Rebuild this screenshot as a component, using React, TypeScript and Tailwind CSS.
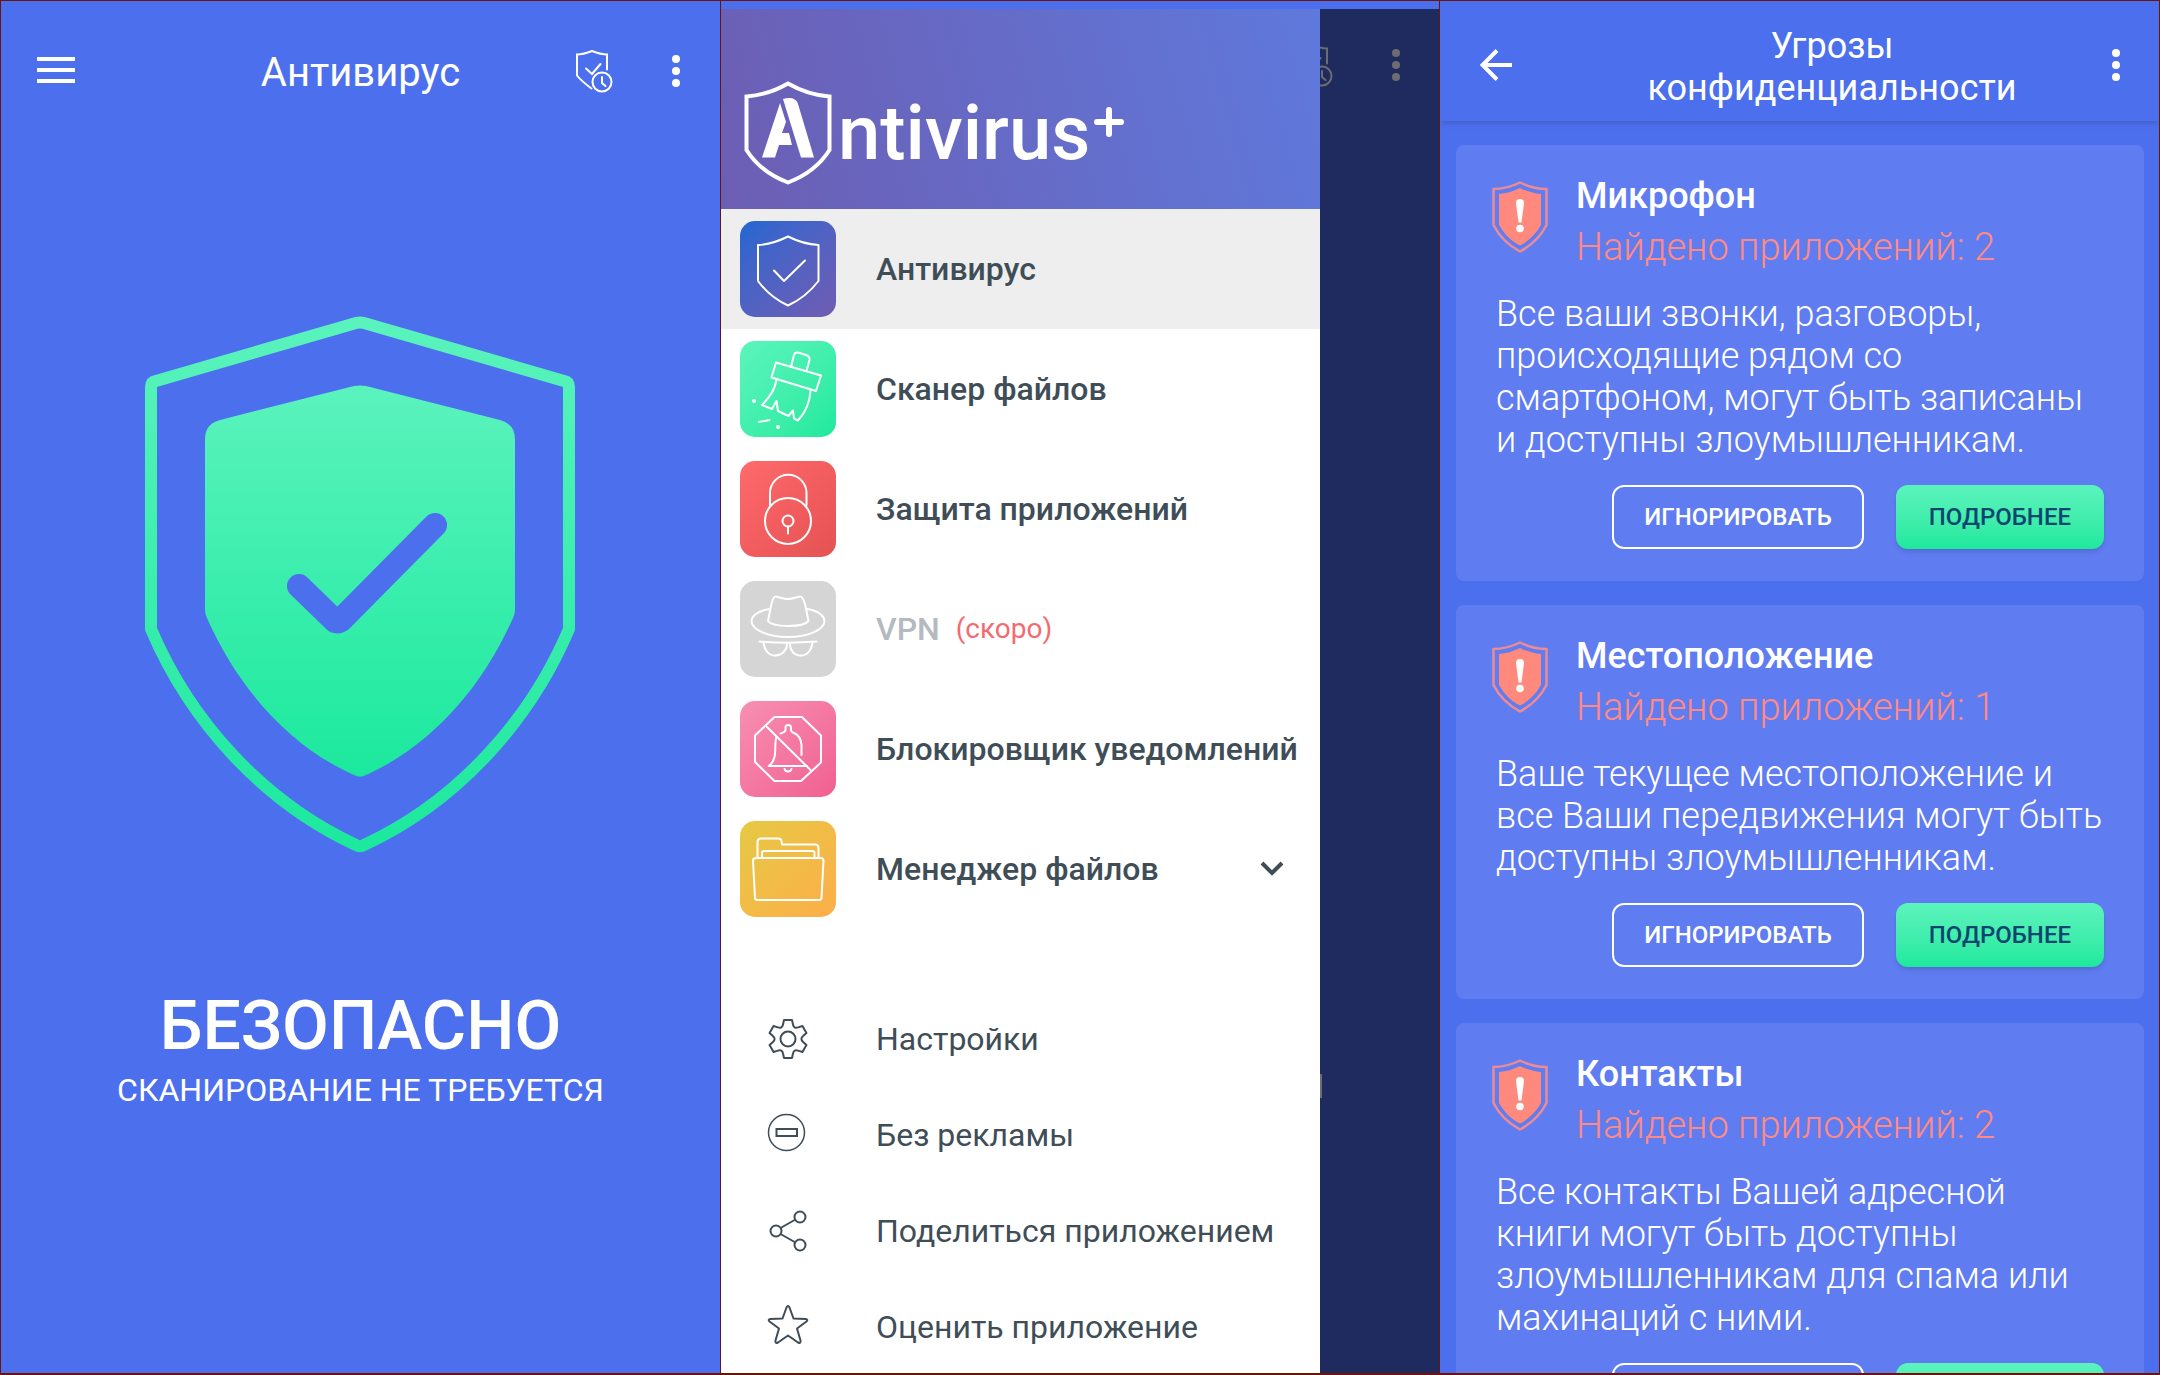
import React from "react";

/* ---------- icons ---------- */

function MenuIcon() {
  return (
    <svg viewBox="0 0 38 28" className="h-7 w-[38px]" fill="currentColor" aria-hidden="true">
      <path d="M0 0h38v4H0zM0 11h38v4H0zM0 22h38v4H0z" />
    </svg>
  );
}

function DotsIcon() {
  return (
    <svg viewBox="0 0 8 32" className="h-8 w-2 shrink-0" fill="currentColor" aria-hidden="true">
      <circle cx="4" cy="4" r="4" />
      <circle cx="4" cy="16" r="4" />
      <circle cx="4" cy="28" r="4" />
    </svg>
  );
}

function ShieldClockIcon() {
  return (
    <svg viewBox="0 0 40 44" className="h-11 w-10 shrink-0" fill="none" stroke="currentColor" strokeWidth="2" strokeLinecap="round" aria-hidden="true">
      <path d="M17.5 39.5C10 34 5 29 3 26.500V5.500C8 5.500 13 4 18 2C23 4 28 5.500 33 5.500V20.500" />
      <path d="M12 19.500L18 25L26.500 15" />
      <circle cx="28" cy="33" r="9.500" />
      <path d="M28 28V34L31.500 37" />
    </svg>
  );
}

function BackIcon() {
  return (
    <svg viewBox="0 0 32 32" className="size-8" fill="none" stroke="currentColor" strokeWidth="4" aria-hidden="true">
      <path d="M32 16H3.500M17 1.500L2.500 16L17 30.500" />
    </svg>
  );
}

function BigShield() {
  return (
    <svg viewBox="0 0 432 538" className="h-[538px] w-[432px]" fill="none" aria-hidden="true">
      <defs>
        <linearGradient id="mint" gradientUnits="userSpaceOnUse" x1="0" y1="0" x2="0" y2="538">
          <stop offset="0" stopColor="#5bf3bd" />
          <stop offset="1" stopColor="#1be99d" />
        </linearGradient>
        <linearGradient id="mintInner" gradientUnits="userSpaceOnUse" x1="0" y1="70" x2="0" y2="462">
          <stop offset="0" stopColor="#5bf3bd" />
          <stop offset="1" stopColor="#1be99d" />
        </linearGradient>
      </defs>
      <path
        d="M6 71Q6 66 11 65L211 7Q215 6 219 7L419 65Q424 66 424 71V313C385 405 312 486 219 529Q215 531.500 211 529C118 486 45 405 6 313Z"
        stroke="url(#mint)"
        strokeWidth="12"
        strokeLinejoin="round"
      />
      <path
        d="M60 123Q60 108 75 104L209 70Q215 69 221 70L355 104Q370 108 370 123V294Q370 298 368 302C337 372 286 430 221 459Q215 462 209 459C144 430 93 372 62 302Q60 298 60 294Z"
        fill="url(#mintInner)"
      />
      <path d="M154 270L189 304Q192 307 196 304L290 209" stroke="#4c6fee" strokeWidth="24" strokeLinecap="round" strokeLinejoin="round" />
    </svg>
  );
}

function LogoMark() {
  return (
    <svg viewBox="0 0 88 104" className="h-[104px] w-[88px] shrink-0" aria-hidden="true">
      <path
        d="M44 2.500C31 10 16 14.500 2.500 15.500V69C12 84 27 95 44 101.500C61 95 76 84 85.500 69V15.500C72 14.500 57 10 44 2.500Z"
        fill="none"
        stroke="#fff"
        strokeWidth="4"
      />
      <path d="M36 22L42 41L38 52H45L48 64H35L31 76.500H18Z" fill="#fff" />
      <path d="M39 18C46 16 52 17 54 23L70 76.500H57Z" fill="#fff" />
    </svg>
  );
}

function Plus() {
  return (
    <svg viewBox="0 0 30 30" className="mt-[26px] size-[30px]" stroke="#fff" strokeWidth="6" strokeLinecap="round" aria-hidden="true">
      <path d="M15 3V27M3 15H27" />
    </svg>
  );
}

function WarnShield() {
  return (
    <svg viewBox="0 0 56 72" className="mt-1.5 h-[72px] w-14 shrink-0" aria-hidden="true">
      <path
        d="M28 1.500C20 5.500 10 8 1.500 8V44C7 55 16 64 28 70.500C40 64 49 55 54.500 44V8C46 8 36 5.500 28 1.500Z"
        fill="none"
        stroke="#ee8b92"
        strokeWidth="2.500"
        strokeLinejoin="round"
      />
      <path d="M28 7C21 10.500 14 12.500 7 13V44C12 53 19 60 28 64.500C37 60 44 53 49 44V13C42 12.500 35 10.500 28 7Z" fill="#ff897d" />
      <path d="M24 22Q24 18 28 18Q32 18 32 22L29.500 41.500H26.500Z" fill="#fff" />
      <circle cx="28" cy="47.500" r="3.800" fill="#fff" />
    </svg>
  );
}

type TileProps = { children: React.ReactNode; className: string };

function Tile({ children, className }: TileProps) {
  return (
    <svg
      viewBox="0 0 96 96"
      className={"size-24 shrink-0 rounded-[15px] " + className}
      fill="none"
      stroke="#fff"
      strokeWidth="2"
      strokeLinejoin="round"
      strokeLinecap="round"
      aria-hidden="true"
    >
      {children}
    </svg>
  );
}

const antivirusTile = (
  <Tile className="bg-linear-to-br from-[#1f66d2] to-[#6f5cb2]">
    <path d="M48 15.500C38 20.500 28 23.500 18 24V60C26 71 36 79 48 84.500C60 79 70 71 78.500 60V24C68 23.500 58 20.500 48 15.500Z" />
    <path d="M34 49.500L44 60L65 39.500" />
  </Tile>
);

const scannerTile = (
  <Tile className="bg-linear-to-br from-[#5bf5bd] to-[#1de99e]">
    <path d="M51 26L54 14Q55 11 58 11.500L66 14Q70 15.500 69.500 19L66.500 30" />
    <path d="M36 21.500L81 34.500L76 50L31.500 36.500Z" />
    <path d="M36.500 39C35 48 30 56 22 64L32 68L36.500 60L38 70L48.500 75L53 69.500L54 77.500L58 79.500C66 71 70 60 70.500 49" />
    <path d="M19 81L29.500 79" />
    <circle cx="14" cy="60" r="1" />
    <circle cx="38" cy="86" r="1" />
  </Tile>
);

const lockTile = (
  <Tile className="bg-linear-to-br from-[#ff6a6c] to-[#e55254]">
    <path d="M30 44V32A18 18 0 0 1 66.500 32V44" />
    <circle cx="48" cy="60" r="23" />
    <circle cx="48" cy="60" r="5.500" />
    <path d="M48 65.500V72.500" />
  </Tile>
);

const vpnTile = (
  <Tile className="bg-[#d5d5d5]">
    <path d="M30 28C16 30 11.500 36 11.500 40C12 49 28 56 48 56C68 56 84 49 84.500 40C84.500 36 80 30 67 28" />
    <path d="M28 40L31 25Q33 15 36 15.500C42 17 45 18 48 18C51 18 55 17 60 15.500Q63 15 65.500 25L68.500 40C63 46.500 33 46.500 28 40Z" />
    <path d="M19.500 60.500C38 62 58 62 76.500 60.500" />
    <path d="M23.500 61.500C24 69 29 74.500 35 74.500C42 74.500 47 69 47 63.500" />
    <path d="M72.500 61.500C72 69 67 74.500 61 74.500C54 74.500 50 69 50 63.500" />
  </Tile>
);

const blockerTile = (
  <Tile className="bg-linear-to-br from-[#f78fb3] to-[#f05f91]">
    <path d="M34.500 16H62L81 34.500V61.500L61 80H34.500L15 61V34.500Z" />
    <path d="M26.500 25.500L70.500 69" />
    <path d="M40.500 32.500Q45.500 31 45.500 29V26.500Q45.500 24 48 24Q51 24 51 26.500V29Q51 31 54 32Q61 35 61.500 44V54" />
    <path d="M36.500 36C34.500 40 36 50 34.500 56Q33 62 28.700 65H67" />
    <path d="M44.500 68A3.700 3.700 0 0 0 51.500 68" />
  </Tile>
);

const folderTile = (
  <Tile className="bg-linear-to-br from-[#e6c944] to-[#fcae49]">
    <path d="M17.500 36V21Q17.500 17.500 21 17.500H38Q41 17.500 41.500 20L42 23.500H75Q78.500 23.500 78.500 27V36" />
    <path d="M22 36V32Q22 30 24 30H72.500Q74.500 30 74.500 32V36" />
    <path d="M16 37H80.500Q83.500 37 83.500 40L81.500 76.500Q81.500 79 79 79H17.500Q15 79 15 76.500L13 40Q13 37 16 37Z" />
  </Tile>
);

function gearOutline() {
  const pts: string[] = [];
  for (let i = 0; i < 6; i++) {
    const a = (i * Math.PI) / 3;
    const at = (x: number, y: number) =>
      `${(x * Math.cos(a) - y * Math.sin(a)).toFixed(2)} ${(x * Math.sin(a) + y * Math.cos(a)).toFixed(2)}`;
    pts.push(`${i === 0 ? "M" : "L"}${at(-4, -19)}L${at(4, -19)}L${at(5, -14.5)}Q${at(5.8, -10.2)} ${at(10.1, -11.6)}`);
  }
  return pts.join("") + "Z";
}

type LineIconProps = { children: React.ReactNode };

function LineIcon({ children }: LineIconProps) {
  return (
    <svg viewBox="-24 -24 48 48" className="size-12" fill="none" stroke="currentColor" strokeWidth="2" strokeLinejoin="round" aria-hidden="true">
      {children}
    </svg>
  );
}

const gearIcon = (
  <LineIcon>
    <path d={gearOutline()} />
    <circle r="7.500" />
  </LineIcon>
);

const noAdsIcon = (
  <LineIcon>
    <circle cx="-1.500" cy="-2.500" r="18" strokeWidth="1.500" />
    <path d="M-11.500 -6H9V1H-11.500Z" strokeLinejoin="miter" />
  </LineIcon>
);

const shareIcon = (
  <LineIcon>
    <circle cx="12" cy="-14" r="5.500" />
    <circle cx="-12" cy="0" r="5.500" />
    <circle cx="12" cy="14" r="5.500" />
    <path d="M-7.500 -3L7.500 -11.500M-7.500 3L7.500 11.500" />
  </LineIcon>
);

const starIcon = (
  <LineIcon>
    <path d="M-1.500 -19.500Q0 -22.500 1.500 -19.500L5.500 -8.500L17.500 -8Q20.500 -7.500 18.500 -5.500L9 1.500L12.500 13.500Q13 17 10 15.500L0 8.500L-10 15.500Q-13 17 -12.500 13.500L-9 1.500L-18.500 -5.500Q-20.500 -7.500 -17.500 -8L-5.500 -8.500Z" />
  </LineIcon>
);

/* ---------- data ---------- */

type Feature = { label: string; icon: React.ReactNode; active?: boolean; soon?: boolean; expandable?: boolean };

const features: Feature[] = [
  { label: "Антивирус", icon: antivirusTile, active: true },
  { label: "Сканер файлов", icon: scannerTile },
  { label: "Защита приложений", icon: lockTile },
  { label: "VPN", icon: vpnTile, soon: true },
  { label: "Блокировщик уведомлений", icon: blockerTile },
  { label: "Менеджер файлов", icon: folderTile, expandable: true },
];

const options = [
  { label: "Настройки", icon: gearIcon },
  { label: "Без рекламы", icon: noAdsIcon },
  { label: "Поделиться приложением", icon: shareIcon },
  { label: "Оценить приложение", icon: starIcon },
];

const threats = [
  {
    title: "Микрофон",
    count: 2,
    text: "Все ваши звонки, разговоры, происходящие рядом со смартфоном, могут быть записаны и доступны злоумышленникам.",
  },
  {
    title: "Местоположение",
    count: 1,
    text: "Ваше текущее местоположение и все Ваши передвижения могут быть доступны злоумышленникам.",
  },
  {
    title: "Контакты",
    count: 2,
    text: "Все контакты Вашей адресной книги могут быть доступны злоумышленникам для спама или махинаций с ними.",
  },
];

/* ---------- screens ---------- */

function HomeScreen() {
  return (
    <section className="flex min-w-0 flex-col items-center overflow-hidden border-l border-[#6b1409] bg-[#4c6fee] text-white">
      <header className="grid w-full grid-cols-[1fr_auto_1fr] items-center px-10 pt-11">
        <button type="button" aria-label="Меню" className="-ml-1 justify-self-start">
          <MenuIcon />
        </button>
        <h1 className="pt-1 text-[40px] leading-[48px]">Антивирус</h1>
        <div className="flex items-center gap-[58px] justify-self-end">
          <button type="button" aria-label="Проверка по расписанию">
            <ShieldClockIcon />
          </button>
          <button type="button" aria-label="Ещё">
            <DotsIcon />
          </button>
        </div>
      </header>
      <div className="mt-[219px]">
        <BigShield />
      </div>
      <p className="mt-[132px] text-[68px] leading-[80px] font-medium">БЕЗОПАСНО</p>
      <p className="mt-1 text-[32px] leading-10">СКАНИРОВАНИЕ НЕ ТРЕБУЕТСЯ</p>
    </section>
  );
}

function DrawerScreen() {
  return (
    <section className="flex min-w-0 flex-col overflow-hidden border-x border-[#6b1409] bg-[#1f2a5f]">
      <div className="h-2 shrink-0 bg-[#4c6fee]" />
      <div className="flex min-h-0 flex-1">
        <aside className="flex min-w-0 flex-1 flex-col bg-white text-[#3f4d57]">
          <div className="flex h-[200px] shrink-0 items-start bg-linear-[75deg] from-[#6c5eb3] to-[#5f79dc] pt-[72px] pl-[23px]">
            <LogoMark />
            <span className="ml-1.5 text-[76px] leading-[104px] font-medium text-white">ntivirus</span>
            <div className="ml-1">
              <Plus />
            </div>
          </div>
          <nav>
            <ul>
              {features.map((f) => (
                <li key={f.label}>
                  <button
                    type="button"
                    className={
                      "flex h-[120px] w-full items-center pr-9 pl-[19px] text-left text-[32px] font-medium " +
                      (f.active ? "bg-[#eeeeee]" : "")
                    }
                  >
                    {f.icon}
                    <span className={"ml-10 whitespace-nowrap " + (f.soon ? "text-[#b4babf]" : "")}>{f.label}</span>
                    {f.soon && <span className="ml-4 text-[28px] font-normal text-[#f26b70]">(скоро)</span>}
                    {f.expandable && (
                      <svg viewBox="0 0 24 16" className="ml-auto h-4 w-6" fill="none" stroke="currentColor" strokeWidth="4" aria-hidden="true">
                        <path d="M2 2L12 12L22 2" />
                      </svg>
                    )}
                  </button>
                </li>
              ))}
            </ul>
            <ul className="mt-[62px]">
              {options.map((o) => (
                <li key={o.label}>
                  <button type="button" className="flex h-24 w-full items-center pl-[19px] text-left text-[32px]">
                    <span className="flex w-24 shrink-0 justify-center">{o.icon}</span>
                    <span className="ml-10 whitespace-nowrap">{o.label}</span>
                  </button>
                </li>
              ))}
            </ul>
          </nav>
        </aside>
        <div className="flex w-[119px] shrink-0 flex-col overflow-hidden text-[#6b6d70]">
          <div className="flex items-center justify-end gap-[58px] pt-[34px] pr-[39px]">
            <ShieldClockIcon />
            <DotsIcon />
          </div>
          <div className="mt-[987px] h-6 w-0.5 bg-current" />
        </div>
      </div>
    </section>
  );
}

type Threat = { title: string; count: number; text: string };

function ThreatCard({ title, count, text }: Threat) {
  return (
    <article className="rounded-lg bg-[#5f7cf1] px-10 pt-[30px] pb-8">
      <div className="-ml-1 flex">
        <WarnShield />
        <div className="ml-7">
          <h2 className="text-[36px] leading-[42px] font-medium">{title}</h2>
          <p className="mt-2 text-[38px] leading-[44px] font-light text-[#ff8a85]">Найдено приложений: {count}</p>
        </div>
      </div>
      <p className="mt-6 text-[36px] leading-[42px] font-light">{text}</p>
      <div className="mt-6 flex justify-end gap-8 text-[24px] font-medium">
        <button type="button" className="h-16 rounded-xl border-2 border-white px-[30px] whitespace-nowrap">
          ИГНОРИРОВАТЬ
        </button>
        <button
          type="button"
          className="h-16 rounded-xl bg-linear-to-b from-[#5bf3bd] to-[#1be99d] px-[33px] whitespace-nowrap text-[#0b4670] shadow-md"
        >
          ПОДРОБНЕЕ
        </button>
      </div>
    </article>
  );
}

function ThreatsScreen() {
  return (
    <section className="flex min-w-0 flex-col overflow-hidden border-r border-[#6b1409] bg-[#4c6fee] text-white">
      <header className="flex h-[120px] shrink-0 items-center pt-2 pr-[39px] pl-10 shadow-md">
        <button type="button" aria-label="Назад" className="shrink-0">
          <BackIcon />
        </button>
        <h1 className="mx-auto pt-1 pl-10 text-center text-[36px] leading-[42px]">
          Угрозы
          <br />
          конфиденциальности
        </h1>
        <button type="button" aria-label="Ещё" className="shrink-0">
          <DotsIcon />
        </button>
      </header>
      <div className="flex min-h-0 flex-1 flex-col gap-6 overflow-hidden pt-6 pr-[15px] pl-4">
        {threats.map((t) => (
          <ThreatCard key={t.title} {...t} />
        ))}
      </div>
    </section>
  );
}

export default function App() {
  return (
    <main className="grid h-screen grid-cols-3 border-t border-b-2 border-[#6b1409] bg-[#4c6fee] font-['Roboto',sans-serif]">
      <HomeScreen />
      <DrawerScreen />
      <ThreatsScreen />
    </main>
  );
}
